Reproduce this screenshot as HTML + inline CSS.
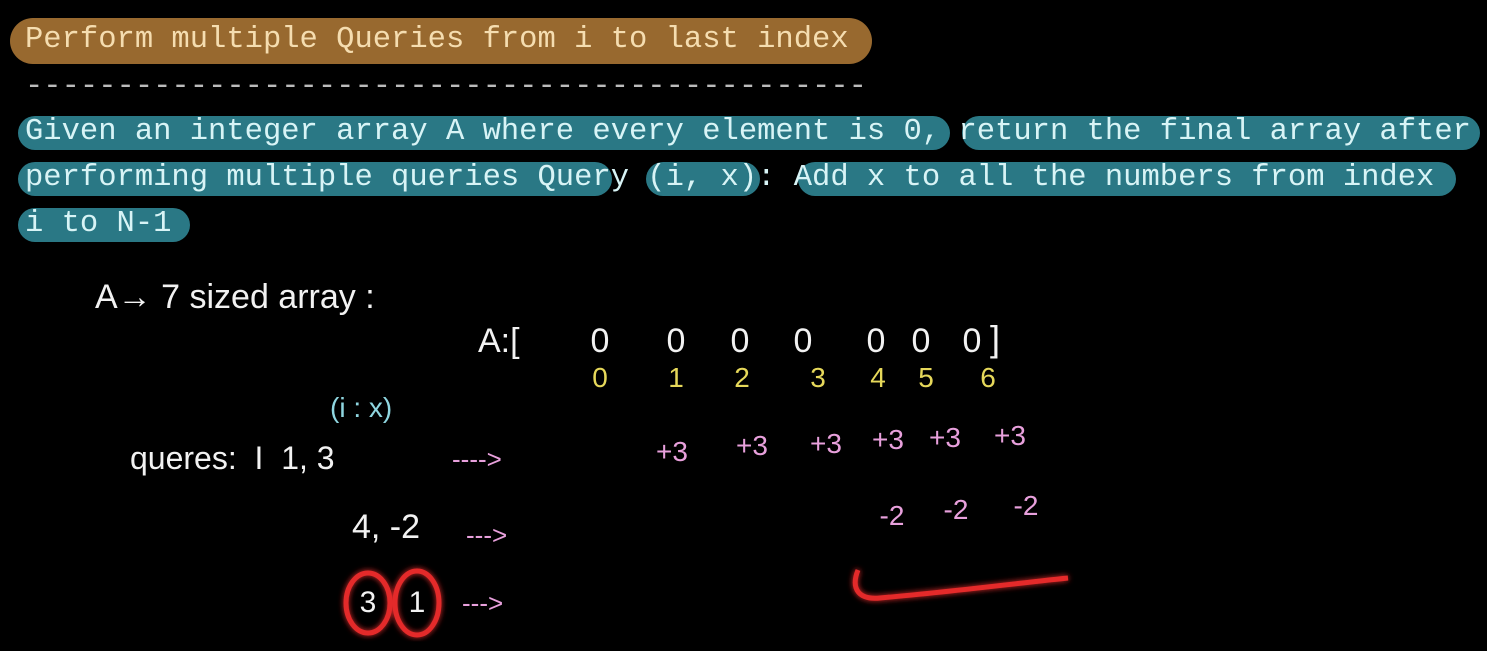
<!DOCTYPE html>
<html><head><meta charset="utf-8"><style>
html,body{margin:0;padding:0;background:#000;width:1487px;height:651px;overflow:hidden;position:relative}
.m{position:absolute;font-family:"Liberation Mono",monospace;font-size:30.5px;line-height:34px;white-space:pre;letter-spacing:0}
.pill{position:absolute;border-radius:17px}
.h{position:absolute;font-family:"Liberation Sans",sans-serif;white-space:pre;color:#f2f2f2}
.c{position:absolute;font-family:"Liberation Sans",sans-serif;transform:translateX(-50%);white-space:pre}
.z{color:#f2f2f2;font-size:34px;top:322px}
.y{color:#e6d85a;font-size:28px;top:362px}
.p{color:#e8a0dc;font-size:28px;top:430px}
.n{color:#e8a0dc;font-size:28px;top:494px}
</style></head><body>
<div class="pill" style="left:10px;top:18px;width:862px;height:46px;border-radius:23px;background:#98692f"></div>
<div class="m" style="left:25px;top:23px;color:#f5ddb0">Perform multiple Queries from i to last index</div>
<div class="m" style="left:25px;top:70px;color:#bbb">----------------------------------------------</div>
<div class="pill" style="left:18px;top:116px;width:932px;height:34px;background:#2a7885"></div>
<div class="pill" style="left:962px;top:116px;width:518px;height:34px;background:#2a7885"></div>
<div class="pill" style="left:18px;top:162px;width:594px;height:34px;background:#2a7885"></div>
<div class="pill" style="left:646px;top:162px;width:114px;height:34px;background:#2a7885"></div>
<div class="pill" style="left:798px;top:162px;width:658px;height:34px;background:#2a7885"></div>
<div class="pill" style="left:18px;top:208px;width:172px;height:34px;background:#2a7885"></div>
<div class="m" style="left:25px;top:115px;color:#d8f4f6">Given an integer array A where every element is 0, return the final array after</div>
<div class="m" style="left:25px;top:161px;color:#d8f4f6">performing multiple queries Query (i, x): Add x to all the numbers from index</div>
<div class="m" style="left:25px;top:207px;color:#d8f4f6">i to N-1</div>

<div class="h" style="left:95px;top:278px;font-size:34px">A→ 7 sized array :</div>
<div class="h" style="left:478px;top:322px;font-size:34px">A:[</div>
<div class="c z" style="left:600px">0</div><div class="c z" style="left:676px">0</div><div class="c z" style="left:740px">0</div><div class="c z" style="left:803px">0</div><div class="c z" style="left:876px">0</div><div class="c z" style="left:921px">0</div><div class="c z" style="left:972px">0</div>
<div class="h" style="left:990px;top:318px;font-size:36px">]</div>
<div class="c y" style="left:600px">0</div><div class="c y" style="left:676px">1</div><div class="c y" style="left:742px">2</div><div class="c y" style="left:818px">3</div><div class="c y" style="left:878px">4</div><div class="c y" style="left:926px">5</div><div class="c y" style="left:988px">6</div>
<div class="h" style="left:330px;top:392px;font-size:28px;color:#8fd6e0">(i : x)</div>
<div class="h" style="left:130px;top:440px;font-size:32px">queres:  I  1, 3</div>
<div class="h" style="left:452px;top:444px;font-size:26px;color:#e8a0dc">----&gt;</div>
<div class="c p" style="left:672px;top:436px">+3</div><div class="c p" style="left:752px;top:430px">+3</div><div class="c p" style="left:826px;top:428px">+3</div><div class="c p" style="left:888px;top:424px">+3</div><div class="c p" style="left:945px;top:422px">+3</div><div class="c p" style="left:1010px;top:420px">+3</div>
<div class="h" style="left:352px;top:508px;font-size:34px">4, -2</div>
<div class="h" style="left:466px;top:520px;font-size:26px;color:#e8a0dc">---&gt;</div>
<div class="c n" style="left:892px;top:500px">-2</div><div class="c n" style="left:956px;top:494px">-2</div><div class="c n" style="left:1026px;top:490px">-2</div>
<div class="c" style="left:368px;top:586px;font-size:30px;color:#f2f2f2">3</div>
<div class="c" style="left:417px;top:586px;font-size:30px;color:#f2f2f2">1</div>
<div class="h" style="left:462px;top:588px;font-size:26px;color:#e8a0dc">---&gt;</div>
<svg style="position:absolute;left:0;top:0" width="1487" height="651">
<defs><filter id="g"><feGaussianBlur stdDeviation="3" result="b"/><feMerge><feMergeNode in="b"/><feMergeNode in="SourceGraphic"/></feMerge></filter></defs>
<g fill="none" stroke="#e42a2a" stroke-width="5" filter="url(#g)">
<ellipse cx="368" cy="603" rx="22" ry="30"/>
<ellipse cx="417" cy="603" rx="22" ry="32"/>
<path d="M858 570 C850 590 860 600 880 598 C950 592 1010 584 1068 578"/>
</g>
</svg>
</body></html>
